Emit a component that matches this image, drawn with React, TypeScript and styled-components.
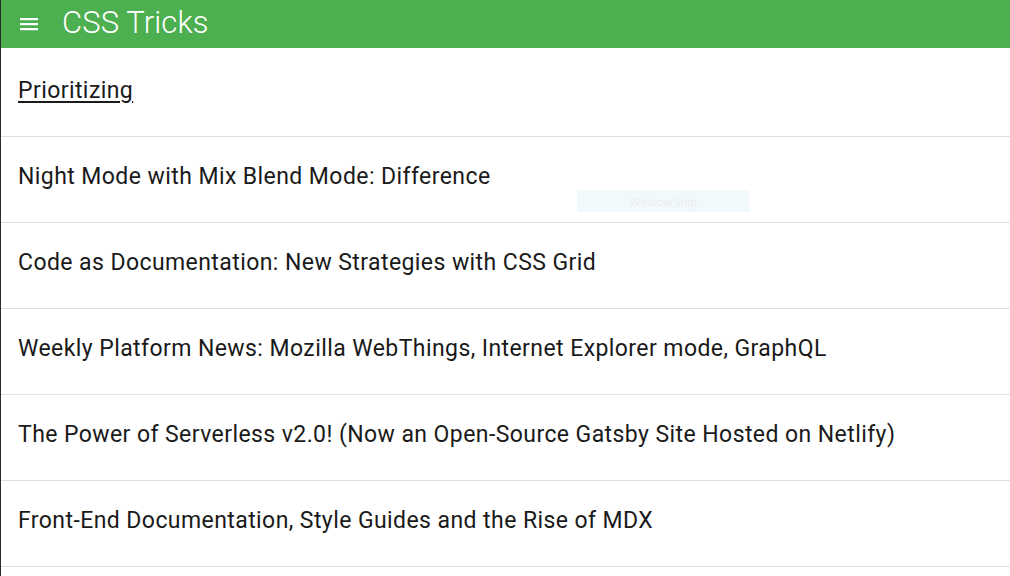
import React from 'react';
import styled, { createGlobalStyle } from 'styled-components';

const GlobalStyle = createGlobalStyle`
  html, body {
    margin: 0;
    padding: 0;
    background: #ffffff;
  }
  body {
    font-family: Roboto, "Noto Sans", "Liberation Sans", sans-serif;
  }
`;

const Page = styled.div`
  position: relative;
  height: 576px;
  overflow: hidden;
  border-left: 1px solid #2b2b2b;
  box-sizing: border-box;
`;

const Header = styled.header`
  height: 48px;
  background-color: #4caf50;
  color: #ffffff;
  display: flex;
  align-items: center;
  padding: 0 0 0 19px;
  gap: 24px;
`;

const MenuButton = styled.button`
  background: none;
  border: none;
  padding: 0;
  width: 18px;
  height: 14px;
  display: flex;
  cursor: pointer;
  margin-top: -1px;
`;

const Title = styled.h1`
  margin: 0;
  font-size: 31px;
  font-weight: 300;
  letter-spacing: 0.1px;
  line-height: 1;
  margin-top: -3px;
`;

const List = styled.ul`
  list-style: none;
  margin: 0;
  padding: 3px 0 0;
`;

const Item = styled.li`
  height: 86px;
  box-sizing: border-box;
  border-bottom: 1px solid #e0e0e0;
  padding: 23px 17px 0;
`;

const PostLink = styled.a<{ $active?: boolean }>`
  font-size: 23px;
  line-height: 33px;
  letter-spacing: 0.42px;
  color: #1a1a1a;
  text-decoration: ${p => (p.$active ? 'underline' : 'none')};
  text-underline-offset: 3px;
  text-decoration-thickness: 2px;
`;

const Snip = styled.div`
  position: absolute;
  left: 576px;
  top: 190px;
  width: 173px;
  height: 22px;
  background: rgba(225, 242, 248, 0.45);
  color: #ececec;
  font-family: "Open Sans", sans-serif;
  font-size: 11px;
  display: flex;
  align-items: center;
  justify-content: center;
  pointer-events: none;
`;

const posts = [
  'Prioritizing',
  'Night Mode with Mix Blend Mode: Difference',
  'Code as Documentation: New Strategies with CSS Grid',
  'Weekly Platform News: Mozilla WebThings, Internet Explorer mode, GraphQL',
  'The Power of Serverless v2.0! (Now an Open-Source Gatsby Site Hosted on Netlify)',
  'Front-End Documentation, Style Guides and the Rise of MDX',
];

const MenuIcon = () => (
  <svg width="18" height="14" viewBox="0 0 18 14">
    <rect x="0" y="1" width="18" height="2.2" fill="#fff" />
    <rect x="0" y="6" width="18" height="2.2" fill="#fff" />
    <rect x="0" y="11" width="18" height="2.2" fill="#fff" />
  </svg>
);

const App: React.FC = () => (
  <Page>
    <GlobalStyle />
    <Header>
      <MenuButton aria-label="menu">
        <MenuIcon />
      </MenuButton>
      <Title>CSS Tricks</Title>
    </Header>
    <List>
      {posts.map((title, index) => (
        <Item key={index}>
          <PostLink href="#" $active={index === 0}>
            {title}
          </PostLink>
        </Item>
      ))}
    </List>
    <Snip>Window Snip</Snip>
  </Page>
);

export default App;
